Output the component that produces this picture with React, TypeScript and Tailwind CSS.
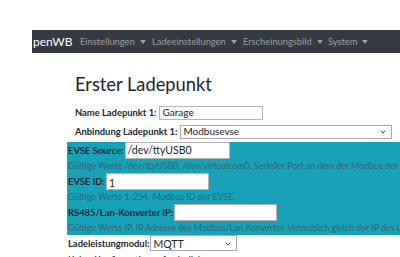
import { ChevronDown } from "lucide-react";

const navItems = [
  { label: "Einstellungen", w: "w-[72px]" },
  { label: "Ladeeinstellungen", w: "w-[91px]" },
  { label: "Erscheinungsbild", w: "w-[85px]" },
  { label: "System", w: "w-[40px]" },
];

function Caret() {
  return <span className="ml-[5px] inline-block h-0 w-0 border-x-[3px] border-t-[4px] border-x-transparent border-t-[#9a9da1] align-middle" />;
}

function Input({ value, className }: { value: string; className: string }) {
  return (
    <div className={"flex items-center border border-[#b5b5b5] bg-white px-[2px] text-[#222] " + className}>
      {value}
    </div>
  );
}

function Select({ value, className }: { value: string; className: string }) {
  return (
    <div className={"flex items-center justify-between border border-[#a9a9a9] bg-white px-[2px] text-[#222] " + className}>
      <span>{value}</span>
      <ChevronDown className="mr-[2px] h-[8px] w-[8px] text-[#444]" strokeWidth={3} />
    </div>
  );
}

export default function App() {
  return (
    <div className="relative h-[257px] w-[400px] overflow-hidden bg-white font-['Lato',sans-serif] text-[9.4px] leading-[15px] text-[#212529]">
      {/* NAVBAR */}
      <div className="ml-[32px] mt-[30px] flex h-[23px] items-center whitespace-nowrap bg-[#343a40]">
        <span className="ml-[1px] w-[47px] text-[12px] text-white">penWB</span>
        <div className="flex items-center text-[9.3px] text-[#9a9da1]">
          {navItems.map((n) => (
            <span key={n.label} className={"flex items-center " + n.w}>
              {n.label}
              <Caret />
            </span>
          ))}
        </div>
      </div>

      {/* HEADING */}
      <h1 className="ml-[75px] mt-[18px] text-[18.3px] leading-[26px] text-[#212529]">Erster Ladepunkt</h1>

      <div className="ml-[75px] mt-[8px] flex flex-col gap-[4px] whitespace-nowrap font-bold">
        <div className="flex items-center gap-[3px]">
          <span>Name Ladepunkt 1:</span>
          <Input value="Garage" className="h-[14px] w-[104px] text-[10px] font-normal" />
        </div>
        <div className="flex items-center gap-[3px]">
          <span>Anbindung Ladepunkt 1:</span>
          <Select value="Modbusevse" className="h-[14px] w-[212px] text-[10px] font-normal" />
        </div>
      </div>

      {/* EVSE SECTION */}
      <div className="ml-[67px] mt-[3px] w-[400px] whitespace-nowrap bg-[#17a2b8] pl-[1px]">
        <div className="flex items-center gap-[1px] font-bold">
          <span>EVSE Source:</span>
          <Input value="/dev/ttyUSB0" className="h-[17px] w-[105px] text-[10.5px] font-normal" />
        </div>
        <div className="text-[8.8px] leading-[14px] text-[#2c6671]">
          Gültige Werte /dev/ttyUSB0, /dev/virtualcom0. Serieller Port an dem der Modbus der EVSE angeschlossen ist.
        </div>
        <div className="flex items-center gap-[1px] font-bold">
          <span>EVSE ID:</span>
          <Input value="1" className="h-[17px] w-[103px] pt-[4px] text-[10.5px] font-normal" />
        </div>
        <div className="text-[8.8px] leading-[14px] text-[#2c6671]">Gültige Werte 1-254. Modbus ID der EVSE.</div>
        <div className="flex items-center gap-[1px] font-bold">
          <span>RS485/Lan-Konverter IP:</span>
          <Input value="" className="h-[17px] w-[103px] font-normal" />
        </div>
        <div className="text-[8.8px] leading-[14px] text-[#2c6671]">
          Gültige Werte IP. IP Adresse des Modbus/Lan Konverter. Vermutlich gleich der IP des Ladepunkts.
        </div>
      </div>

      <div className="ml-[68px] flex items-center gap-[1px] font-bold">
        <span>Ladeleistungmodul:</span>
        <Select value="MQTT" className="h-[16px] w-[87px] pt-[2px] text-[10.5px] font-normal" />
      </div>
      <div className="ml-[68px] mt-[1px] whitespace-nowrap text-[9.6px]">Keine Konfiguration erforderlich</div>
    </div>
  );
}
